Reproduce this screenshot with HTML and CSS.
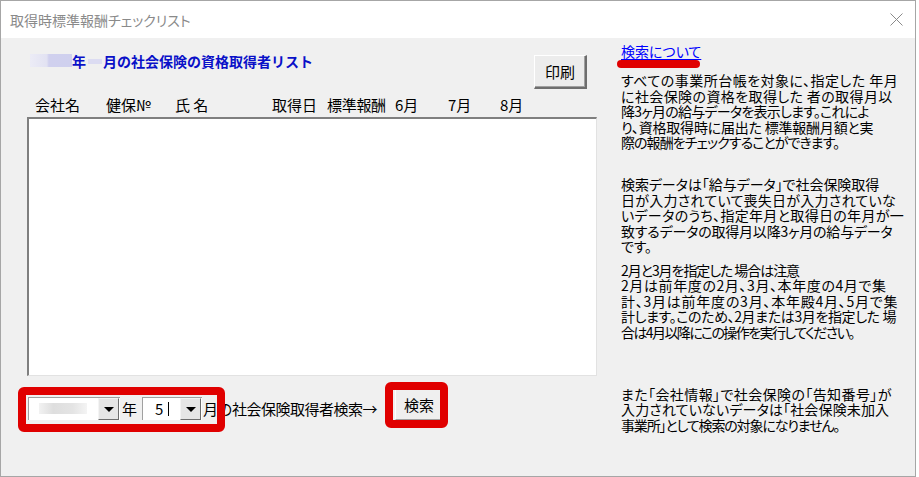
FILE: index.html
```html
<!DOCTYPE html>
<html lang="ja">
<head>
<meta charset="utf-8">
<link rel="stylesheet" href="styles.css">
</head>
<body>
<div class="window">
  <div class="titlebar">
    <span class="title">取得時標準報酬チェックリスト</span>
    <svg class="close" width="13" height="13" viewBox="0 0 13 13"><path d="M0.5 0.5 L12.5 12.5 M12.5 0.5 L0.5 12.5" stroke="#8a8a8a" stroke-width="1" fill="none"/></svg>
  </div>
  <div class="body">
    <div class="left">
      <div class="head-row">
        <div class="heading"><span class="blur-year"></span><span>年</span><span class="blur-month"></span><span>月の社会保険の資格取得者リスト</span></div>
        <div class="btn print">印刷</div>
      </div>
      <div class="cols">
        <span class="c c1">会社名</span>
        <span class="c c2">健保№</span>
        <span class="c c3">氏&nbsp;名</span>
        <span class="c c4">取得日</span>
        <span class="c c5">標準報酬</span>
        <span class="c c6">6月</span>
        <span class="c c7">7月</span>
        <span class="c c8">8月</span>
      </div>
      <div class="listbox"></div>
      <div class="search-row">
        <div class="combo combo-year"><span class="blur-combo"></span><span class="drop"><span class="tri"></span></span></div>
        <span class="lbl lbl-year">年</span>
        <div class="combo combo-month"><span class="val">5</span><span class="caret"></span><span class="drop"><span class="tri"></span></span></div>
        <span class="lbl lbl-month">月の社会保険取得者検索→</span>
        <div class="btn search">検索</div>
        <span class="mark mark1"></span>
        <span class="mark mark2"></span>
      </div>
    </div>
    <div class="right">
      <div class="link">検索について</div>
      <span class="mark-line"></span>
      <p class="p1">
        <span class="ln ls-p5">すべての事業所台帳を対象に、指定した 年月</span>
        <span class="ln ls-p4">に社会保険の資格を取得した 者の取得月以</span>
        <span class="ln ls-m7">降3ヶ月の給与データを表示します。これによ</span>
        <span class="ln ls-m2">り、資格取得時に届出た 標準報酬月額と実</span>
        <span class="ln ls-m9">際の報酬をチェックすることができます。</span>
      </p>
      <p class="p2">
        <span class="ln ls-0">検索データは「給与データ」で社会保険取得</span>
        <span class="ln ls-p2">日が入力されていて喪失日が入力されていな</span>
        <span class="ln ls-p3">いデータのうち、指定年月と取得日の年月が一</span>
        <span class="ln ls-m2">致するデータの取得月以降3ヶ月の給与データ</span>
        <span class="ln ls-m2">です。</span>
      </p>
      <p class="p3">
        <span class="ln ls-m10">2月と3月を指定した 場合は注意</span>
        <span class="ln ls-p6">2月は前年度の2月、3月、本年度の4月で集</span>
        <span class="ln ls-p7">計、3月は前年度の3月、本年殿4月、5月で集</span>
        <span class="ln ls-m4">計します。このため、2月または3月を指定した 場</span>
        <span class="ln ls-m15">合は4月以降にこの操作を実行してください。</span>
      </p>
      <p class="p4">
        <span class="ln ls-p4">また「会社情報」で社会保険の「告知番号」が</span>
        <span class="ln ls-p1">入力されていないデータは「社会保険未加入</span>
        <span class="ln ls-m11">事業所」として検索の対象になりません。</span>
      </p>
    </div>
  </div>
</div>
</body>
</html>
```

FILE: styles.css
```css
* { box-sizing: border-box; }
body {
  margin: 0;
  background: #ffffff;
  font-family: "Noto Sans CJK JP", "Noto Sans", sans-serif;
  color: #000;
}
.window {
  width: 916px;
  height: 477px;
  border: 1px solid #a6a6a6;
  background: #f0f0f0;
  display: flex;
  flex-direction: column;
  overflow: hidden;
}
.titlebar {
  height: 37px;
  flex-shrink: 0;
  background: #ffffff;
  display: flex;
  align-items: center;
  justify-content: space-between;
  padding: 0 12px 0 9px;
}
.title {
  font-size: 14px;
  color: #8a8a8a;
  font-feature-settings: "palt";
  margin-top: 1px;
}
.close { display: block; }

.body { flex: 1; display: flex; }

.left {
  width: 604px;
  flex-shrink: 0;
  padding-left: 26px;
  display: flex;
  flex-direction: column;
}
.head-row {
  margin-top: 17px;
  height: 34px;
  display: flex;
  justify-content: space-between;
  padding-right: 18px;
}
.heading {
  margin-top: -1px;
  padding-left: 3px;
  display: flex;
  align-items: flex-start;
  font-size: 14px;
  line-height: 14px;
  font-weight: bold;
  color: #0a10c8;
  white-space: nowrap;
}
.blur-year {
  display: inline-block;
  width: 42px;
  height: 13px;
  background: linear-gradient(90deg, #ececf6 0%, #e2e2f2 40%, #d0d0ee 45%, #cfd0ee 100%);
}
.blur-month {
  display: inline-block;
  width: 14px;
  height: 5px;
  margin: 5px 1px 0 2px;
  background: #dcdcf2;
}
.btn {
  display: flex;
  align-items: center;
  justify-content: center;
  font-size: 15px;
  background: #ececec;
  border-style: solid;
  border-color: #ffffff #6e6e6e #6e6e6e #ffffff;
}
.print {
  width: 53px;
  height: 34px;
  border-width: 1px 2px 2px 1px;
  box-shadow: inset -1px -1px 0 #a0a0a0;
}
.cols {
  margin-top: 8px;
  display: flex;
  font-size: 15px;
  line-height: 16px;
  padding-left: 8px;
  white-space: nowrap;
}
.c1 { width: 71px; }
.c2 { width: 69px; }
.c3 { width: 97px; }
.c4 { width: 55px; }
.c5 { width: 68px; letter-spacing: -0.3px; }
.c6 { width: 53px; }
.c7 { width: 52px; }
.listbox {
  margin-top: 4px;
  width: 570px;
  height: 259px;
  background: #ffffff;
  border-style: solid;
  border-width: 2px 1px 1px 2px;
  border-color: #7f7f7f #e2e2e2 #e2e2e2 #7f7f7f;
}
.search-row {
  margin-top: 12px;
  height: 32px;
  position: relative;
  display: flex;
  align-items: flex-end;
}
.combo {
  height: 23px;
  background: #ffffff;
  border-style: solid;
  border-width: 1px 0 0 1px;
  border-color: #a0a0a0;
  display: flex;
  align-items: center;
  justify-content: flex-end;
  position: relative;
}
.combo-year { width: 92px; margin-left: 1px; }
.combo-month { width: 60px; }
.blur-combo {
  position: absolute;
  left: 10px;
  top: 5px;
  width: 48px;
  height: 11px;
  background: linear-gradient(90deg, #f2f2f2 0%, #dedede 30%, #e4e4e4 70%, #f4f4f4 100%);
}
.val {
  position: absolute;
  left: 12px;
  top: 0;
  font-size: 15px;
  line-height: 21px;
}
.caret {
  position: absolute;
  left: 25px;
  top: 4px;
  width: 1px;
  height: 14px;
  background: #000;
}
.drop {
  width: 21px;
  height: 22px;
  margin-right: 1px;
  background: #e6e6e6;
  border-style: solid;
  border-width: 1px;
  border-color: #f4f4f4 #6e6e6e #6e6e6e #f4f4f4;
  display: flex;
  align-items: center;
  justify-content: center;
}
.tri {
  width: 0;
  height: 0;
  border-left: 5px solid transparent;
  border-right: 5px solid transparent;
  border-top: 5px solid #000;
}
.lbl {
  font-size: 15px;
  line-height: 23px;
  white-space: nowrap;
}
.lbl-year { margin: 0 5px 0 2px; }
.lbl-month { margin-left: 1px; letter-spacing: -0.5px; }
.search {
  width: 48px;
  height: 32px;
  margin-left: 18px;
  border-width: 1px;
  border-color: #ffffff #a0a0a0 #a0a0a0 #ffffff;
  background: #efefef;
}
.mark {
  position: absolute;
  border: 8px solid #e00000;
  border-radius: 6px;
  pointer-events: none;
}
.mark1 { left: -9px; top: -1px; width: 207px; height: 45px; }
.mark2 { left: 358px; top: -6px; width: 63px; height: 46px; }

.right {
  flex: 1;
  position: relative;
  padding: 6px 0 0 16px;
  font-size: 14px;
  line-height: 15.5px;
  white-space: nowrap;
  overflow: hidden;
  font-feature-settings: "palt";
}
.link {
  color: #0000ff;
  text-decoration: underline;
  text-underline-offset: 2px;
}
.mark-line {
  position: absolute;
  left: 12px;
  top: 22px;
  width: 83px;
  height: 8px;
  border-radius: 4px;
  background: #e00000;
}
.right p { margin: 0; }
.ln { display: block; height: 15.5px; }
.ls-p7 { letter-spacing: 0.76px; }
.ls-p6 { letter-spacing: 0.6px; }
.ls-p5 { letter-spacing: 0.48px; }
.ls-p4 { letter-spacing: 0.4px; }
.ls-p3 { letter-spacing: 0.32px; }
.ls-p2 { letter-spacing: 0.25px; }
.ls-p1 { letter-spacing: 0.15px; }
.ls-0 { letter-spacing: -0.05px; }
.ls-m2 { letter-spacing: -0.2px; }
.ls-m4 { letter-spacing: -0.37px; }
.ls-m7 { letter-spacing: -0.75px; }
.ls-m9 { letter-spacing: -0.94px; }
.ls-m10 { letter-spacing: -1.07px; }
.ls-m11 { letter-spacing: -1.15px; }
.ls-m15 { letter-spacing: -1.58px; }
.p1 { margin-top: 13.5px !important; }
.p2 { margin-top: 26.5px !important; }
.p3 { margin-top: 8px !important; }
.p4 { margin-top: 46.5px !important; }
```
